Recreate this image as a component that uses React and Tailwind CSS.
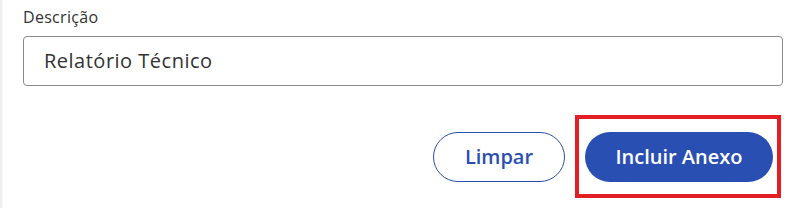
import React from 'react';

export default function App() {
  return (
    <div className="flex w-[803px] h-[208px] bg-white" style={{ fontFamily: '"Open Sans", sans-serif' }}>
      <div className="w-[3px] bg-gradient-to-r from-[#ececec] to-[#f7f7f7]" />
      <div className="flex-1 flex flex-col pl-[20px] pr-[20px]">
        <label className="pt-[6px] text-[16px] tracking-[0.3px] leading-[22px] text-[#333]">Descrição</label>
        <div className="mt-[8px] h-[50px] border border-[#8a8a8a] rounded-[4px] flex items-center px-[20px]">
          <span className="text-[20px] tracking-[0.5px] text-[#333]">Relatório Técnico</span>
        </div>
        <div className="flex justify-end items-center mt-[29px] pr-[2px]">
          <button className="w-[132px] h-[50px] rounded-full border border-[#2a4fb3] text-[#2a4fb3] text-[20px] font-semibold">
            Limpar
          </button>
          <div className="ml-[10px] border-4 border-[#e41e25] pl-[6px] pr-[4px] pt-[13px] pb-[12px]">
            <button className="w-[188px] h-[50px] rounded-full bg-[#2a4fb3] text-white text-[20px] font-semibold">
              Incluir Anexo
            </button>
          </div>
        </div>
      </div>
    </div>
  );
}
